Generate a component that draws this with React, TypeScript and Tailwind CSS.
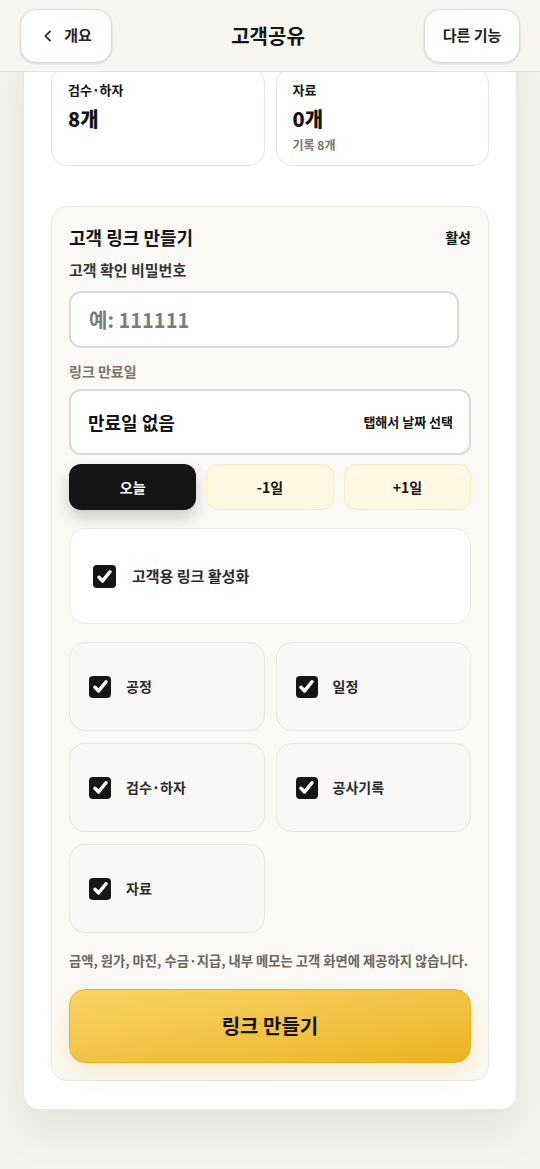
import React from 'react';

// --------------- Déclaration des consts
const FONT = { fontFamily: '"Noto Sans CJK KR", "Noto Sans", sans-serif' };

const SHARE_ITEMS = ['공정', '일정', '검수·하자', '공사기록', '자료'];

// case cochée noire
const Check: React.FC<{ size?: string }> = ({ size = 'w-[22px] h-[22px]' }) => (
  <span className={`${size} shrink-0 rounded-[4px] bg-[#151515] flex items-center justify-center`}>
    <svg viewBox="0 0 24 24" className="w-[19px] h-[19px]" fill="none" stroke="white" strokeWidth="4.4" strokeLinecap="round" strokeLinejoin="round">
      <path d="M5 13l4.6 4.6L19 6" />
    </svg>
  </span>
);

const App: React.FC = () => {
  return (
    <div style={FONT} className="min-h-[1169px] bg-[#f4f3ee] text-[#141414] pb-14">
      {/* header */}
      <header className="sticky top-0 z-10 h-[72px] bg-[#f7f6f1] border-b border-[#e6e3dc] flex items-center justify-between px-5">
        <button className="h-[54px] w-[92px] bg-white rounded-2xl border border-[#dedad2] shadow-sm flex items-center justify-center gap-2 text-[15px] font-bold text-[#222]">
          <svg viewBox="0 0 24 24" className="w-[16px] h-[16px]" fill="none" stroke="#222" strokeWidth="2.6" strokeLinecap="round" strokeLinejoin="round">
            <path d="M15 5l-7 7 7 7" />
          </svg>
          개요
        </button>
        <h1 className="text-[20px] font-bold">고객공유</h1>
        <button className="h-[54px] w-[96px] bg-white rounded-2xl border border-[#dedad2] shadow-sm flex items-center justify-center text-[15px] font-bold text-[#222]">
          다른 기능
        </button>
      </header>

      {/* contenu */}
      <main className="-mt-[34px] mx-[23px] bg-white rounded-2xl border border-[#ebe8e1] shadow-[0_20px_40px_rgba(120,110,80,0.12)] px-[27px] pt-7 pb-[28px]">
        <div className="grid grid-cols-2 gap-[11px]">
          <div className="h-[99px] rounded-2xl border border-[#e7e4de] bg-white px-4 pt-[13px]">
            <div className="text-[13px] font-bold leading-[18px]">검수·하자</div>
            <div className="text-[20px] font-extrabold leading-[28px] mt-[6px]">8개</div>
          </div>
          <div className="h-[99px] rounded-2xl border border-[#e7e4de] bg-white px-4 pt-[13px]">
            <div className="text-[13px] font-bold leading-[18px]">자료</div>
            <div className="text-[20px] font-extrabold leading-[28px] mt-[6px]">0개</div>
            <div className="text-[12px] font-bold text-[#7a746a] leading-[16px] mt-[4px]">기록 8개</div>
          </div>
        </div>

        {/* lien client */}
        <section className="mt-10 rounded-2xl border border-[#ebe8e1] bg-[#faf9f6] px-[17px] pt-[17px] pb-[17px]">
          <div className="flex items-center justify-between">
            <h2 className="text-[18px] font-bold leading-[26px]">고객 링크 만들기</h2>
            <span className="text-[14px] font-bold">활성</span>
          </div>

          <div className="mt-[10px] text-[15px] font-bold text-[#333] leading-[20px]">고객 확인 비밀번호</div>
          <div className="mt-[11px] w-[390px] h-[57px] bg-white rounded-xl border-2 border-[#dcdad6] flex items-center px-[18px] text-[20px] font-bold text-[#7b7b7b]">
            예: 111111
          </div>

          <div className="mt-[14px] text-[14px] font-bold text-[#7a7468] leading-[18px]">링크 만료일</div>
          <div className="mt-[9px] h-[66px] bg-white rounded-xl border-2 border-[#dcdad6] flex items-center justify-between pl-[17px] pr-[16px]">
            <span className="text-[18px] font-bold">만료일 없음</span>
            <span className="text-[13px] font-bold">탭해서 날짜 선택</span>
          </div>

          <div className="mt-[9px] grid grid-cols-3 gap-[10px]">
            <button className="h-[46px] rounded-xl bg-[#151515] text-white text-[14px] font-bold shadow-[0_8px_16px_rgba(0,0,0,0.18)]">오늘</button>
            <button className="h-[46px] rounded-xl bg-[#fff8e3] border border-[#fcecbb] text-[14px] font-bold">-1일</button>
            <button className="h-[46px] rounded-xl bg-[#fff8e3] border border-[#fcecbb] text-[14px] font-bold">+1일</button>
          </div>

          <div className="mt-[18px] h-[96px] bg-white rounded-2xl border border-[#ebe8e1] flex items-center gap-[16px] pl-[23px]">
            <Check size="w-[23px] h-[23px]" />
            <span className="text-[15px] font-bold text-[#2a2a2a]">고객용 링크 활성화</span>
          </div>

          <div className="mt-[18px] grid grid-cols-2 gap-x-[11px] gap-y-[12px]">
            {SHARE_ITEMS.map((label) => (
              <div key={label} className="h-[89px] rounded-2xl border border-[#ebe8e1] bg-[#f9f8f6] flex items-center gap-[15px] pl-[19px]">
                <Check />
                <span className="text-[14px] font-bold text-[#2a2a2a]">{label}</span>
              </div>
            ))}
          </div>

          <p className="mt-[19px] text-[13.3px] font-bold text-[#6b665d] leading-[18px] whitespace-nowrap">
            금액, 원가, 마진, 수금·지급, 내부 메모는 고객 화면에 제공하지 않습니다.
          </p>

          <button className="mt-[19px] w-full h-[74px] rounded-2xl border border-[#e6b21c] bg-gradient-to-br from-[#f7d463] to-[#ecb31d] text-[20px] font-bold text-[#141414] shadow-[0_10px_24px_rgba(240,190,40,0.22)]">
            링크 만들기
          </button>
        </section>
      </main>
    </div>
  );
};
export default App;
